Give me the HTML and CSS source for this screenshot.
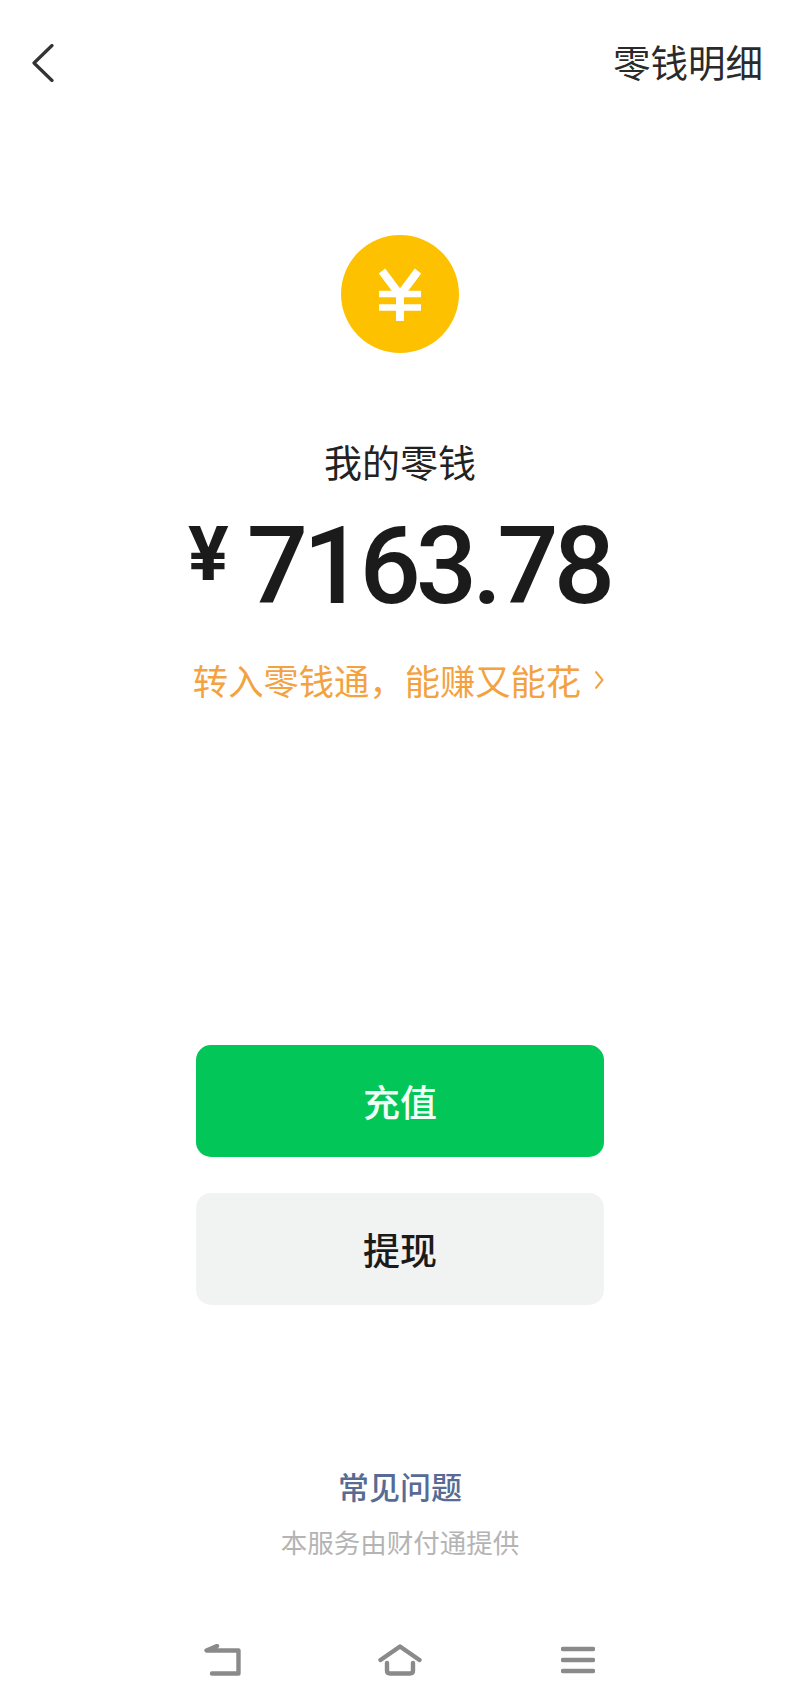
FILE: index.html
```html
<!DOCTYPE html>
<html lang="zh-CN">
<head>
<meta charset="utf-8">
<title>我的零钱</title>
<link rel="stylesheet" href="styles.css">
</head>
<body>
<div class="page">
  <header class="topbar">
    <svg class="back" width="22" height="38" viewBox="0 0 22 38" aria-hidden="true"><path d="M20 1.500 2 19 20 36.500" fill="none" stroke="#333" stroke-width="3.200" stroke-linecap="round" stroke-linejoin="round"/></svg>
    <span class="detail">零钱明细</span>
  </header>
  <svg class="coin" width="118" height="118" viewBox="0 0 118 118" aria-hidden="true">
    <circle cx="59" cy="59" r="59" fill="#fec100"/>
    <path d="M41 36 59 60 77 36" fill="none" stroke="#fff" stroke-width="8"/>
    <path d="M38 59H80M38 72.500H80" fill="none" stroke="#fff" stroke-width="6.500"/>
    <path d="M59 58V86" fill="none" stroke="#fff" stroke-width="8"/>
  </svg>
  <div class="label">我的零钱</div>
  <div class="amount"><span class="yen">¥</span><span class="digits">7163.78</span></div>
  <div class="promo"><span>转入零钱通，能赚又能花</span>
    <svg class="promo-arrow" width="10" height="20" viewBox="0 0 10 20" aria-hidden="true"><path d="M1.500 1.500 8.500 10 1.500 18.500" fill="none" stroke="#f3a23f" stroke-width="2"/></svg>
  </div>
  <div class="actions">
    <div class="btn btn-primary">充值</div>
    <div class="btn btn-secondary">提现</div>
  </div>
  <div class="faq">常见问题</div>
  <div class="provider">本服务由财付通提供</div>
  <nav class="navbar">
    <svg width="37" height="32" viewBox="0 0 37 32" aria-hidden="true"><path d="M13 2 2.500 6.500H34.500V29.500H8" fill="none" stroke="#8a8a8a" stroke-width="4.400" stroke-linecap="round" stroke-linejoin="round"/></svg>
    <svg width="44" height="32" viewBox="0 0 44 32" aria-hidden="true"><path d="M2.500 16 22 2.500 41.500 16M9 19V26.500Q9 29.500 12 29.500H32Q35 29.500 35 26.500V19" fill="none" stroke="#8a8a8a" stroke-width="4.400" stroke-linecap="round" stroke-linejoin="round"/></svg>
    <svg class="nav-menu" width="34" height="32" viewBox="0 0 34 32" aria-hidden="true"><path d="M2 5H32M2 16H32M2 27H32" fill="none" stroke="#8a8a8a" stroke-width="4.400" stroke-linecap="round"/></svg>
  </nav>
</div>
</body>
</html>
```
FILE: styles.css
```css
* { box-sizing: border-box; }
html, body { margin: 0; padding: 0; background: #fff; }
.page {
  width: 800px;
  height: 1706px;
  overflow: hidden;
  display: flex;
  flex-direction: column;
  align-items: center;
  font-family: "Noto Sans CJK SC", "Noto Sans", sans-serif;
  color: #1b1b1b;
}
.topbar {
  width: 100%;
  height: 44px;
  margin-top: 39px;
  padding: 0 37px 0 32px;
  display: flex;
  justify-content: space-between;
  align-items: center;
}
.back { margin-top: 3px; }
.detail { font-size: 37.500px; line-height: 44px; color: #2a2a2a; }
.coin { margin-top: 152px; display: block; }
.label { margin-top: 86px; font-size: 38px; line-height: 44px; color: #222; }
.amount {
  margin-top: 28px;
  padding-right: 2px;
  height: 110px;
  display: flex;
  align-items: center;
  font-family: Roboto, sans-serif;
  font-weight: 500;
}
.yen { font-size: 76px; font-weight: 700; line-height: 76px; margin-right: 18px; margin-top: -25px; }
.digits { font-size: 108px; line-height: 110px; letter-spacing: -5px; }
.promo {
  margin-top: 37px;
  padding-right: 3px;
  display: flex;
  align-items: center;
  gap: 13px;
  font-size: 35.300px;
  line-height: 44px;
  color: #f3a23f;
}
.promo-arrow { display: block; }
.actions { margin-top: 343px; display: flex; flex-direction: column; gap: 36px; }
.btn {
  width: 408px;
  height: 112px;
  border-radius: 15px;
  display: flex;
  align-items: center;
  justify-content: center;
  font-size: 37px;
  font-weight: 500;
}
.btn-primary { background: #02c658; color: #f2fff7; }
.btn-secondary { background: #f1f3f3; color: #1b1b1b; }
.faq { margin-top: 161px; font-size: 31px; line-height: 40px; font-weight: 500; color: #576b95; }
.provider { margin-top: 18px; font-size: 26.500px; line-height: 36px; color: #b4b4b4; }
.navbar {
  width: 100%;
  margin-top: 84px;
  padding: 0 204px;
  display: flex;
  gap: 137px;
  align-items: center;
}
.navbar svg { display: block; }
.navbar .nav-menu { margin-left: 2px; }
```
